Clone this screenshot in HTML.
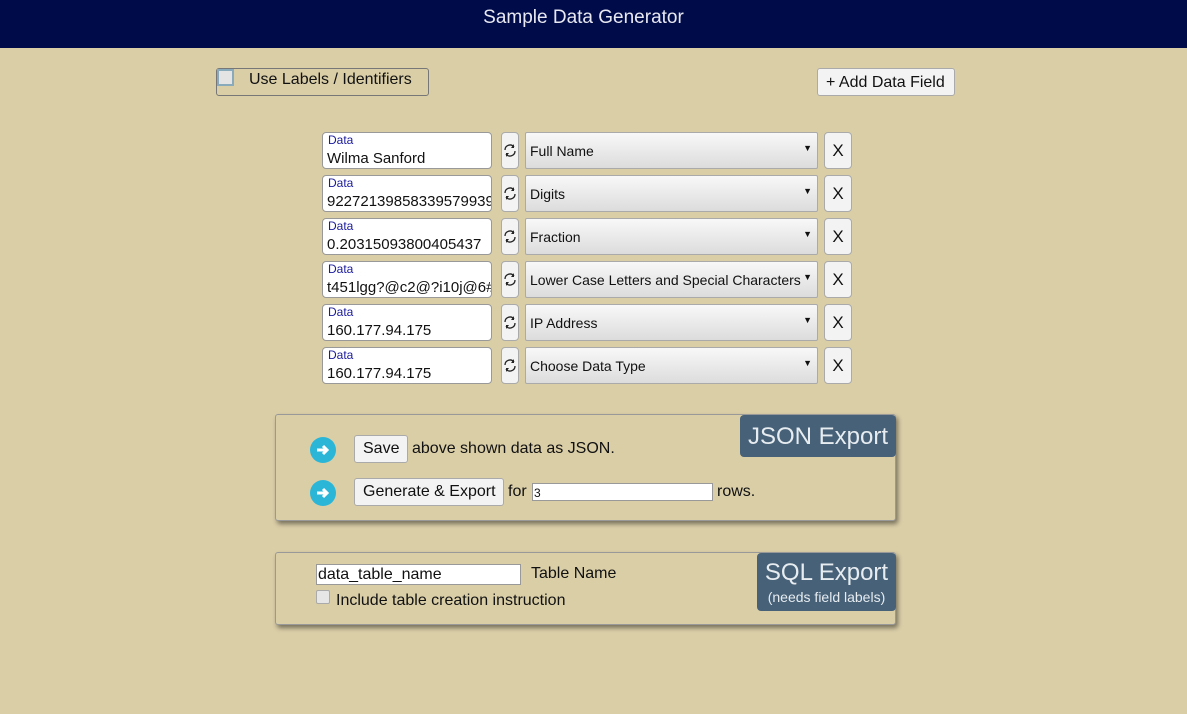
<!DOCTYPE html>
<html><head><meta charset="utf-8"><style>
*{box-sizing:border-box}
body{margin:0;width:1187px;height:714px;background:#dacea7;font-family:"Liberation Sans",sans-serif;position:relative;overflow:hidden;color:#111}
.a{position:absolute}
.hdr{left:0;top:0;width:1167px;height:48px;background:#000b4a;color:#e8e8f0;font-size:19px;text-align:center;padding-top:7px}
.hb{left:0;top:0;width:1187px;height:48px;background:#000b4a}
.btn{background:#f3f3f3;border:1px solid #aaa;border-radius:3px;font-size:16px;color:#111}
.inp{background:#fff;border:1px solid #999;border-radius:4px;width:170px;height:37px;overflow:hidden;white-space:nowrap}
.inp .l{position:absolute;left:5px;top:0px;font-size:12px;color:#1a1a9a}
.inp .v{position:absolute;left:4px;top:17px;font-size:15px}
.ref{width:18px;height:37px;background:#f3f3f3;border:1px solid #aaa;border-radius:4px}
.sel{width:293px;height:37px;border:1px solid #aaa;border-radius:2px;background:linear-gradient(#f8f8f8,#dcdcdc);font-size:14px;padding:10px 0 0 4px}
.sel:after{content:"▼";position:absolute;right:5px;top:10px;font-size:9px}
.x{width:28px;height:37px;background:#f3f3f3;border:1px solid #aaa;border-radius:4px;font-size:17px;text-align:center;padding-top:8px}
.panel{border:1px solid #999;border-radius:3px;box-shadow:2px 3px 5px rgba(0,0,0,.45);background:#dacea7}
.tag{background:#476178;color:#e6ecf0;border-radius:4px;text-align:center}
.arr{width:26px;height:26px;border-radius:50%;background:#2bb6d8}
</style></head><body>
<div class="a hb"></div>
<div class="a hdr">Sample Data Generator</div>
<div class="a" style="left:216px;top:68px;width:213px;height:28px;border:1px solid #777;border-radius:3px"></div>
<div class="a" style="left:217px;top:69px;width:17px;height:17px;background:#e4e4e4;border:2px solid #8ab"></div>
<div class="a" style="left:249px;top:71px;font-size:16px">Use Labels / Identifiers</div>
<div class="a btn" style="left:817px;top:68px;width:138px;height:28px;padding:5px 0 0 8px">+ Add Data Field</div>

<div id="rows"></div>
<script>
var d=[["Wilma Sanford","Full Name"],["9227213985833957993958","Digits"],["0.20315093800405437","Fraction"],["t451lgg?@c2@?i10j@6#","Lower Case Letters and Special Characters"],["160.177.94.175","IP Address"],["160.177.94.175","Choose Data Type"]];
var h="";d.forEach(function(r,i){var y=132+43*i;
h+='<div class="a inp" style="left:322px;top:'+y+'px"><span class="l">Data</span><span class="v">'+r[0]+'</span></div>';
h+='<div class="a ref" style="left:501px;top:'+y+'px"><svg width="16" height="35" viewBox="0 0 16 35"><path d="M3 17a5 5 0 0 1 9-3M13 18a5 5 0 0 1-9 3" fill="none" stroke="#222" stroke-width="1.3"/><path d="M12 11v4h-3zM4 24v-4h3z" fill="#222"/></svg></div>';
h+='<div class="a sel" style="left:525px;top:'+y+'px">'+r[1]+'</div>';
h+='<div class="a x" style="left:824px;top:'+y+'px">X</div>';});
document.getElementById("rows").innerHTML=h;
</script>

<div class="a panel" style="left:275px;top:414px;width:621px;height:107px"></div>
<div class="a tag" style="left:740px;top:415px;width:156px;height:42px;font-size:24px;padding-top:8px">JSON Export</div>
<div class="a arr" style="left:310px;top:437px"><svg width="26" height="26"><path d="M7 13h9M13 9l4 4-4 4" stroke="#fff" stroke-width="3" fill="none"/></svg></div>
<div class="a btn" style="left:354px;top:435px;width:54px;height:28px;padding:4px 0 0 8px">Save</div>
<div class="a" style="left:412px;top:440px;font-size:16px">above shown data as JSON.</div>
<div class="a arr" style="left:310px;top:480px"><svg width="26" height="26"><path d="M7 13h9M13 9l4 4-4 4" stroke="#fff" stroke-width="3" fill="none"/></svg></div>
<div class="a btn" style="left:354px;top:478px;width:150px;height:28px;padding:4px 0 0 8px">Generate &amp; Export</div>
<div class="a" style="left:508px;top:483px;font-size:16px">for</div>
<div class="a" style="left:532px;top:483px;width:181px;height:18px;background:#fff;border:1px solid #999;font-size:12px;padding:2px 1px">3</div>
<div class="a" style="left:717px;top:483px;font-size:16px">rows.</div>

<div class="a panel" style="left:275px;top:552px;width:621px;height:73px"></div>
<div class="a tag" style="left:757px;top:553px;width:139px;height:58px;padding-top:6px"><div style="font-size:24px">SQL Export</div><div style="font-size:14px;margin-top:2px">(needs field labels)</div></div>
<div class="a" style="left:316px;top:564px;width:205px;height:21px;background:#fff;border:1px solid #999;font-size:16px;padding:1px 1px">data_table_name</div>
<div class="a" style="left:531px;top:565px;font-size:16px">Table Name</div>
<div class="a" style="left:316px;top:590px;width:14px;height:14px;background:#e6e6e6;border:1px solid #aaa;border-radius:2px"></div>
<div class="a" style="left:336px;top:592px;font-size:16px">Include table creation instruction</div>
</body></html>
